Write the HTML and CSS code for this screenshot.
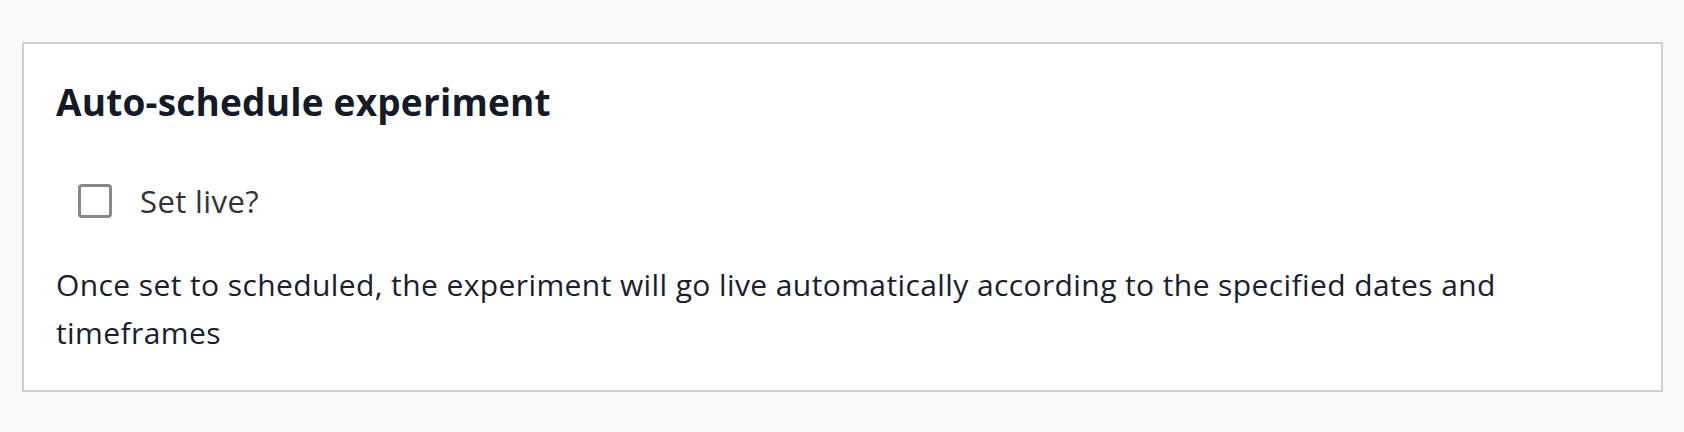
FILE: index.html
```html
<!DOCTYPE html>
<html lang="en">
<head>
<meta charset="utf-8">
<title>Auto-schedule experiment</title>
<link rel="stylesheet" href="styles.css">
</head>
<body>
  <section class="card">
    <h2 class="card-title">Auto-schedule experiment</h2>
    <label class="check-row">
      <input type="checkbox" class="check-input">
      <span class="check-box"></span>
      <span class="check-label">Set live?</span>
    </label>
    <p class="card-text">Once set to scheduled, the experiment will go live automatically according to the specified dates and timeframes</p>
  </section>
</body>
</html>
```

FILE: styles.css
```css
html, body {
  margin: 0;
  padding: 0;
}
body {
  background: #f8f9fb;
  padding: 42px 21px 0 22px;
  font-family: "Open Sans", "Lato", sans-serif;
  font-variant-ligatures: none;
  color: #1a2030;
}
.card {
  background: #ffffff;
  border: 2px solid #cfcfcf;
  padding: 30px 40px 0 32px;
  box-sizing: content-box;
  height: 316px;
}
.card-title {
  margin: 0;
  font-size: 37px;
  letter-spacing: 0.2px;
  line-height: 56px;
  font-weight: 700;
  color: #141a28;
}
.check-row {
  display: flex;
  align-items: center;
  margin: 53px 0 0 22px;
  height: 36px;
}
.check-input {
  display: none;
}
.check-box {
  width: 28px;
  height: 28px;
  border: 3px solid #888888;
  border-radius: 4px;
  flex: none;
}
.check-label {
  margin-left: 28px;
  font-size: 31px;
  letter-spacing: 0.4px;
  color: #333333;
}
.card-text {
  margin: 42px 0 0 0;
  font-size: 30px;
  letter-spacing: 0.4px;
  line-height: 48px;
  color: #1a2030;
}
```
